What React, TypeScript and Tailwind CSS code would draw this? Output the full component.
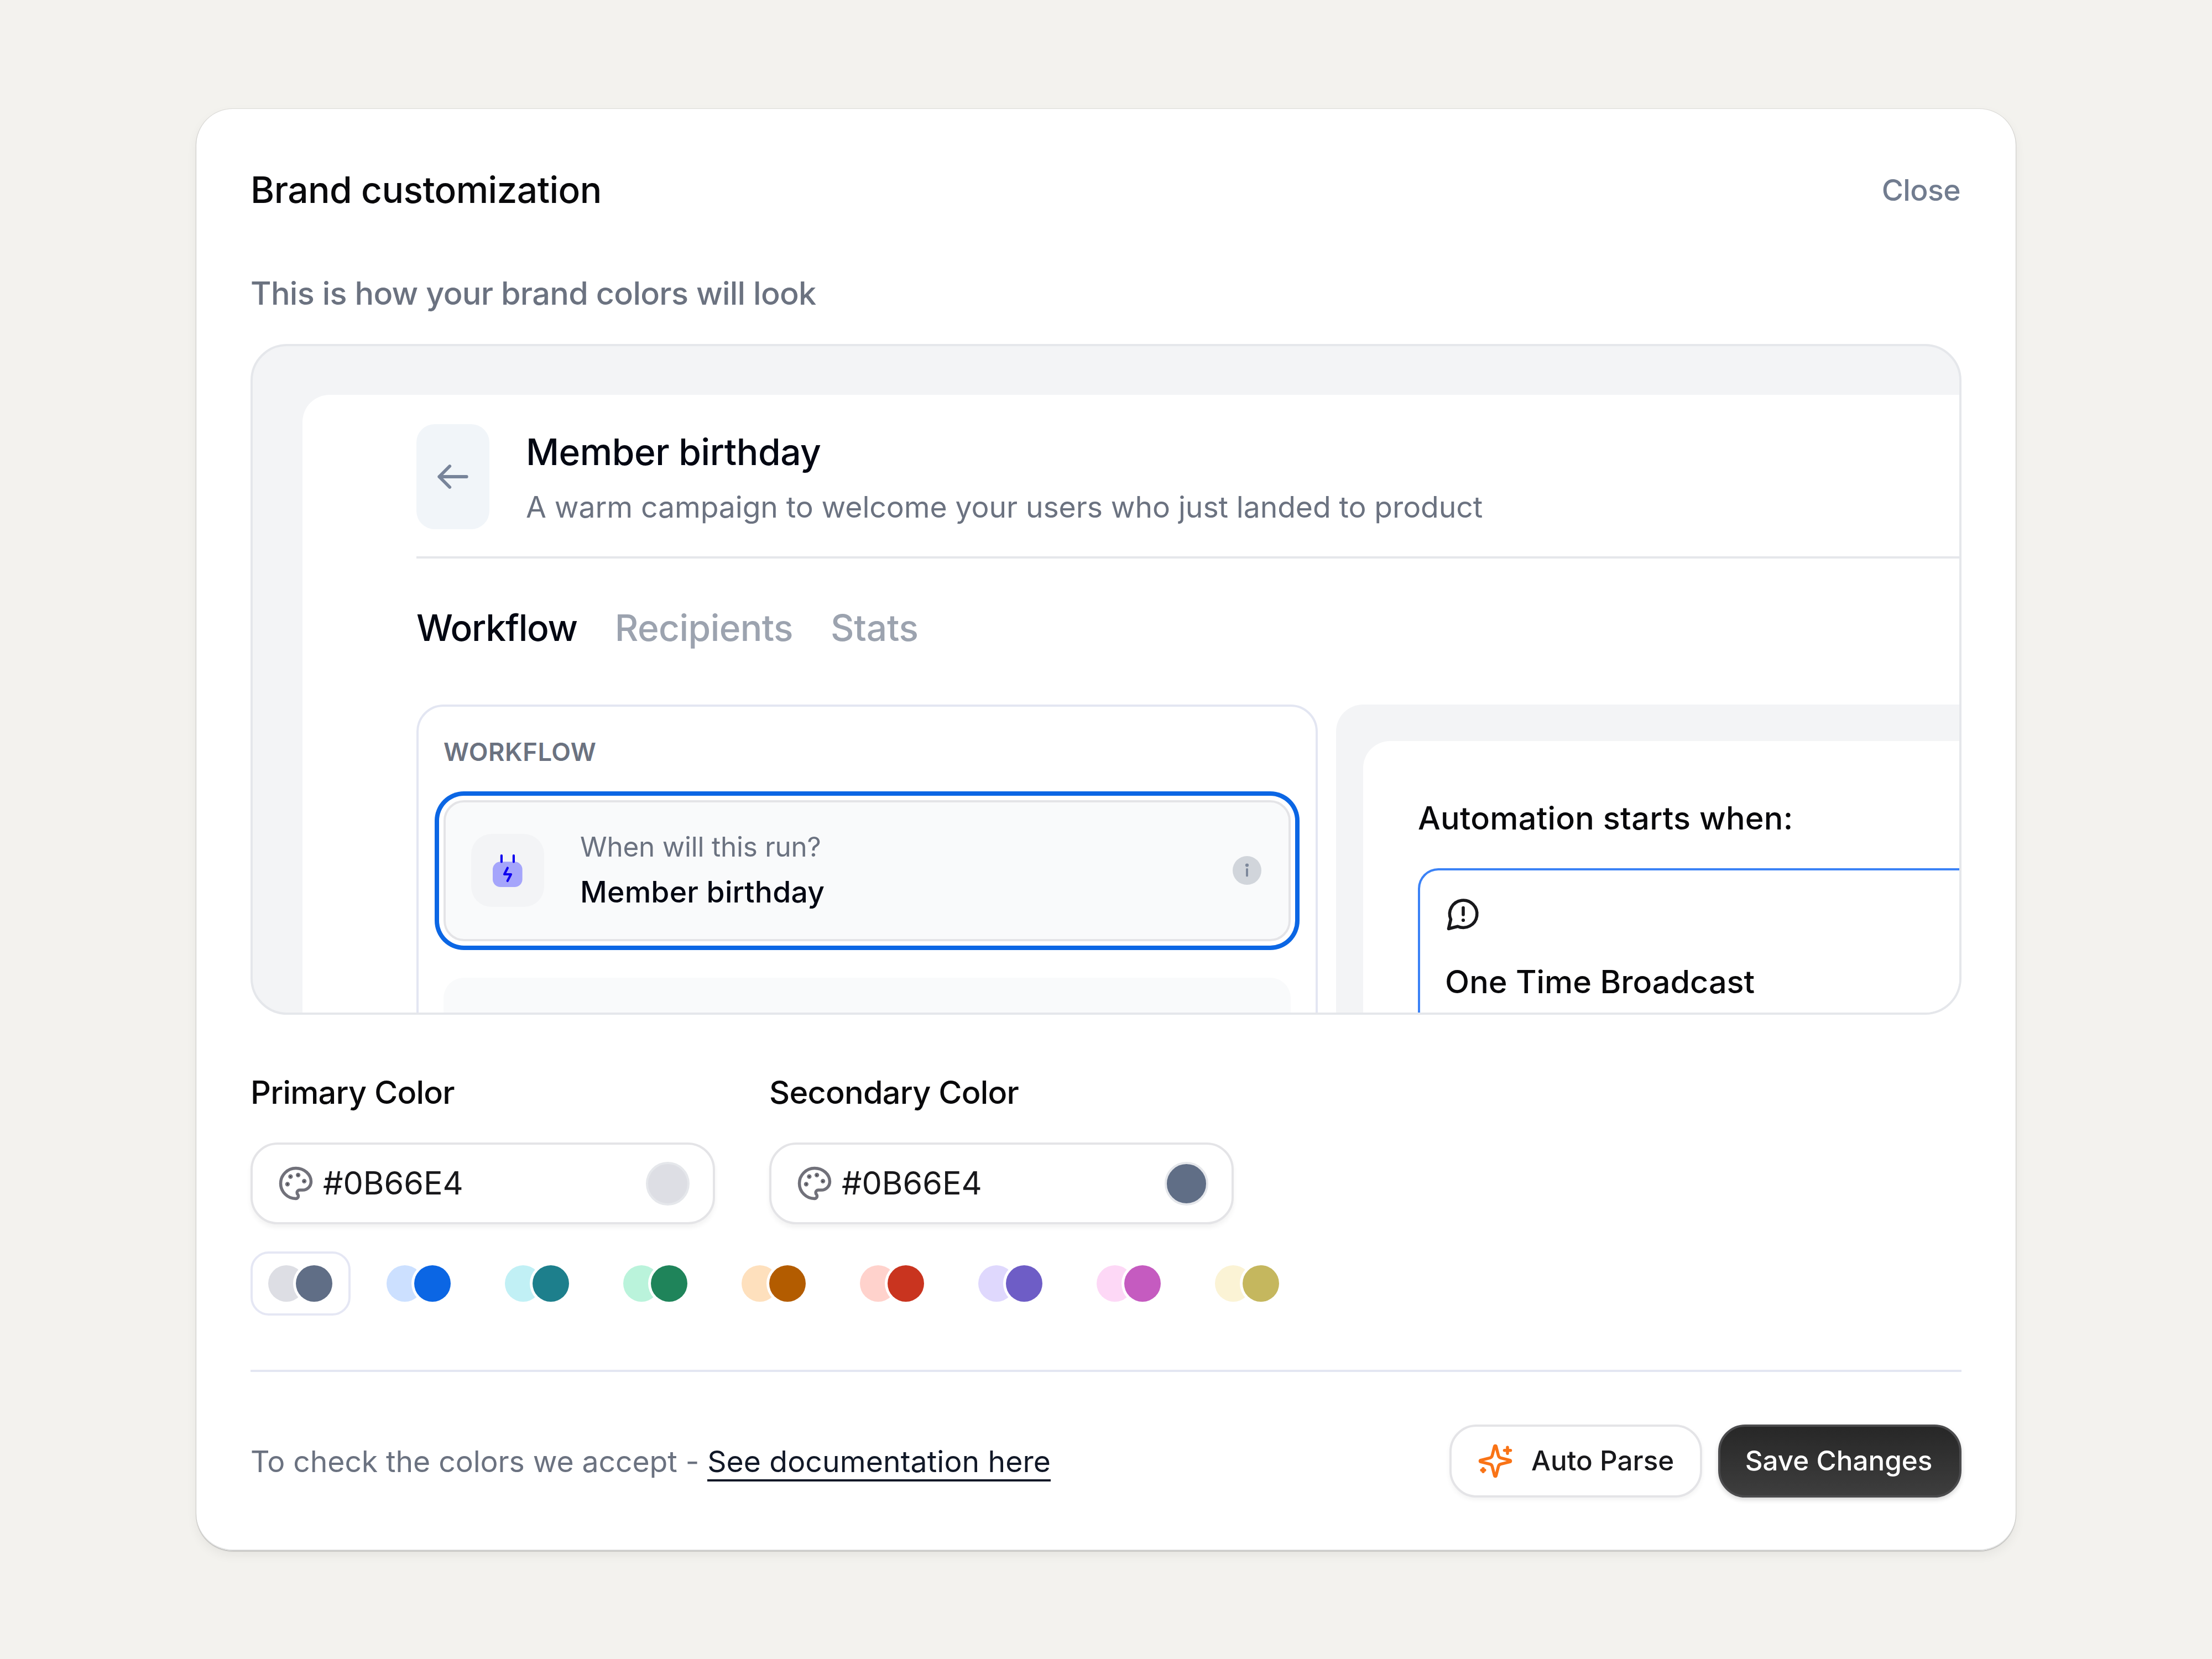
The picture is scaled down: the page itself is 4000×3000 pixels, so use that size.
import type { ReactNode } from "react";

const swatches = [
  { light: "bg-[#dddee4]", dark: "bg-[#606e86]" },
  { light: "bg-[#cce0ff]", dark: "bg-[#0b66e4]" },
  { light: "bg-[#c1f0f5]", dark: "bg-[#1d7f8c]" },
  { light: "bg-[#baf3db]", dark: "bg-[#1f845a]" },
  { light: "bg-[#fee0bd]", dark: "bg-[#b35c00]" },
  { light: "bg-[#ffd2cc]", dark: "bg-[#c9341f]" },
  { light: "bg-[#dfd8fd]", dark: "bg-[#6e5dc6]" },
  { light: "bg-[#fdd8f6]", dark: "bg-[#c55bc0]" },
  { light: "bg-[#fbf3d5]", dark: "bg-[#c5b75e]" },
];

function ArrowLeftIcon() {
  return (
    <svg className="h-[66px] w-[66px]" viewBox="0 0 16 16" fill="none" stroke="#78849a" strokeWidth="1.4" strokeLinecap="round" strokeLinejoin="round">
      <path d="M14 8H2M6.600 3.400 2 8l4.600 4.600" />
    </svg>
  );
}

function PlugIcon() {
  return (
    <svg className="h-[66px] w-[66px]" viewBox="0 0 66 66" fill="none">
      <rect x="6" y="17.3" width="53.6" height="45.7" rx="14" fill="#a5a5fb" />
      <path d="M21.900 6V17.500M43.900 6V17.500" stroke="#0f00ef" strokeWidth="4.2" strokeLinecap="round" />
      <path d="M32.900 28.500 27 40H39L32.700 52" stroke="#0f00ef" strokeWidth="4.2" strokeLinecap="round" strokeLinejoin="round" />
    </svg>
  );
}

function InfoIcon() {
  return (
    <svg className="h-[52px] w-[52px]" viewBox="0 0 52 52">
      <circle cx="26" cy="26" r="26" fill="#d1d5db" />
      <circle cx="26" cy="16.5" r="3.1" fill="#7d889b" />
      <path d="M26 24v11.500" stroke="#7d889b" strokeWidth="4" strokeLinecap="round" />
    </svg>
  );
}

function MessageIcon() {
  return (
    <svg className="h-[66px] w-[66px]" viewBox="0 0 66 66" fill="none" stroke="#18181b" strokeWidth="5.6" strokeLinecap="round" strokeLinejoin="round">
      <path d="M6.500 59.500 10.500 42.500A24.700 24.700 0 1 1 23 55.200Z" />
      <path d="M33 21.500V34" />
      <circle cx="33" cy="44" r="3.1" fill="#18181b" stroke="none" />
    </svg>
  );
}

function PaletteIcon() {
  return (
    <svg className="h-[66px] w-[66px]" viewBox="0 0 24 24" fill="none" stroke="#71717a" strokeWidth="2" strokeLinecap="round" strokeLinejoin="round">
      <circle cx="13.5" cy="6.5" r=".5" fill="#18181b" />
      <circle cx="17.5" cy="10.5" r=".5" fill="#18181b" />
      <circle cx="8.5" cy="7.5" r=".5" fill="#18181b" />
      <circle cx="6.5" cy="12.5" r=".5" fill="#18181b" />
      <path d="M12 2C6.500 2 2 6.500 2 12s4.500 10 10 10c.926 0 1.648-.746 1.648-1.688 0-.437-.18-.835-.437-1.125-.29-.289-.438-.652-.438-1.125a1.640 1.640 0 0 1 1.668-1.668h1.996c3.051 0 5.555-2.503 5.555-5.554C21.965 6.012 17.461 2 12 2z" />
    </svg>
  );
}

function SparklesIcon() {
  return (
    <svg className="h-[66px] w-[66px]" viewBox="0 0 24 24" fill="none" stroke="#f97316" strokeWidth="2" strokeLinecap="round" strokeLinejoin="round">
      <path d="M9.937 15.500A2 2 0 0 0 8.500 14.063l-6.135-1.582a.5.5 0 0 1 0-.962L8.500 9.936A2 2 0 0 0 9.937 8.500l1.582-6.135a.5.5 0 0 1 .963 0L14.063 8.500A2 2 0 0 0 15.500 9.937l6.135 1.581a.5.5 0 0 1 0 .964L15.500 14.063a2 2 0 0 0-1.437 1.437l-1.582 6.135a.5.5 0 0 1-.963 0z" />
      <path d="M20 3v4M22 5h-4M4 17v2M5 18H3" />
    </svg>
  );
}

type ColorFieldProps = {
  label: string;
  value: string;
  swatch: string;
};

function ColorField({ label, value, swatch }: ColorFieldProps) {
  return (
    <div className="w-[840px]">
      <div className="h-[70px] text-[57.6px] leading-[70px] font-medium tracking-[-0.75px] text-[#09090b]">{label}</div>
      <div className="mt-[56px] flex h-[148px] items-center rounded-[49px] border-4 border-[#e4e4e7] bg-white pr-[42px] pl-[45px] shadow-[0_6px_8px_rgba(0,0,0,0.05)]">
        <PaletteIcon />
        <span className="ml-[16px] flex-1 text-[57.6px] leading-none text-[#18181b]">{value}</span>
        <span className={`h-[79px] w-[79px] rounded-full border-4 border-[#e5e7eb] ${swatch}`} />
      </div>
    </div>
  );
}

function Button({ dark, children }: { dark?: boolean; children: ReactNode }) {
  const base = "flex h-[132px] items-center rounded-[49px] border-4 text-[49.4px] leading-none font-medium";
  return (
    <button
      className={
        dark
          ? `${base} w-[440px] justify-center border-[#4b4b4d] bg-linear-to-b from-[#272727] to-[#3e3e3e] pr-[4px] text-white shadow-[0_4px_8px_rgba(0,0,0,0.16)]`
          : `${base} w-[457px] border-[#e4e4e7] bg-white pl-[46px] text-[#18181b] shadow-[0_4px_8px_rgba(0,0,0,0.05)]`
      }
    >
      {children}
    </button>
  );
}

function WorkflowCard() {
  return (
    <div className="h-[700px] w-[1630px] shrink-0 rounded-[49px] border-4 border-[#e3e6f2] px-[45px] pt-[52px]">
      <div className="h-[60px] text-[45.2px] leading-[60px] font-semibold tracking-[0.5px] text-[#6b7280]">WORKFLOW</div>
      <div className="mt-[57px] flex h-[255px] items-center rounded-[37px] border-4 border-[#e4e4e7] bg-[#f9fafb] pr-[49px] pb-[1px] pl-[46px] ring-8 ring-[#0b66e4] ring-offset-8">
        <div className="flex h-[132px] w-[132px] items-center justify-center rounded-[37px] bg-[#f3f4f6]">
          <PlugIcon />
        </div>
        <div className="ml-[65px] flex-1 pb-[4px]">
          <div className="text-[49.4px] leading-[82px] tracking-[-0.2px] text-[#6b7280]">When will this run?</div>
          <div className="text-[53.5px] leading-[82px] font-medium tracking-[0.2px] text-[#030712]">Member birthday</div>
        </div>
        <InfoIcon />
      </div>
      <div className="mt-[66px] h-[255px] rounded-[37px] bg-[#f9fafb]" />
    </div>
  );
}

function AutomationPanel() {
  return (
    <div className="h-[700px] flex-1 rounded-tl-[49px] bg-[#f3f4f6] pt-[66px] pl-[49px]">
      <div className="h-full rounded-tl-[49px] bg-white pt-[104px] pl-[99px]">
        <div className="text-[57.6px] leading-[70px] font-medium tracking-[0.25px] text-[#09090b]">Automation starts when:</div>
        <div className="mt-[56px] h-[400px] rounded-tl-[37px] border-t-4 border-l-4 border-[#3b82f6] pt-[46px] pl-[45px]">
          <MessageIcon />
          <div className="mt-[54px] text-[57.6px] leading-[70px] font-medium whitespace-nowrap text-[#09090b]">One Time Broadcast</div>
        </div>
      </div>
    </div>
  );
}

function Preview() {
  return (
    <div className="h-[1213px] overflow-hidden rounded-[66px] border-4 border-[#e5e7eb] bg-[#f3f4f6] pt-[88px] pl-[90px]">
      <div className="h-full rounded-tl-[49px] bg-white pt-[53px] pl-[206px]">
        <div className="flex h-[243px] items-start border-b-4 border-[#e5e7eb]">
          <div className="flex h-[190px] w-[132px] items-center justify-center rounded-[33px] bg-[#f1f5f9]">
            <ArrowLeftIcon />
          </div>
          <div className="ml-[66px] pt-[1px]">
            <div className="text-[65.8px] leading-[99px] font-medium tracking-[-0.45px] text-[#030712]">Member birthday</div>
            <div className="text-[53.5px] leading-[99px] tracking-[-0.1px] text-[#6b7280]">A warm campaign to welcome your users who just landed to product</div>
          </div>
        </div>
        <div className="flex h-[264px] items-center gap-[68px] pb-[13px] text-[65.8px] leading-none font-medium tracking-[-0.55px] text-[#9ca3af]">
          <span className="tracking-[-1.2px] text-[#030712]">Workflow</span>
          <span>Recipients</span>
          <span className="tracking-[-0.2px]">Stats</span>
        </div>
        <div className="flex gap-[33px]">
          <WorkflowCard />
          <AutomationPanel />
        </div>
      </div>
    </div>
  );
}

export default function App() {
  return (
    <div className="flex h-[3000px] w-[4000px] items-start justify-center bg-[#f3f2ee] pt-[197px] font-['Inter',sans-serif]">
      <div className="flex h-[2607px] w-[3290px] flex-col rounded-[66px] bg-white px-[98px] pt-[97px] shadow-[inset_0_-2px_0_#e2e3e3,0_0_0_1px_rgba(9,9,11,0.08),0_1px_2px_rgba(9,9,11,0.25),0_8px_20px_rgba(9,9,11,0.06)]">
        <div className="flex h-[99px] items-center justify-between">
          <h1 className="text-[65.8px] leading-none font-medium tracking-[-0.57px] text-[#09090b]">Brand customization</h1>
          <button className="pr-[2px] text-[53.5px] leading-none font-medium tracking-[-0.6px] text-[#717c8f]">Close</button>
        </div>
        <div className="mt-[97px] mb-[52px] h-[80px] text-[57.6px] leading-[80px] font-medium tracking-[-0.69px] text-[#6b7280]">This is how your brand colors will look</div>
        <Preview />
        <div className="mt-[105px] flex gap-[98px]">
          <ColorField label="Primary Color" value="#0B66E4" swatch="bg-[#dddee4]" />
          <ColorField label="Secondary Color" value="#0B66E4" swatch="bg-[#606e86]" />
        </div>
        <div className="mt-[49px] flex gap-[33px]">
          {swatches.map((s, i) => (
            <div key={s.dark} className={`flex h-[116px] w-[181px] items-center rounded-[33px] border-4 pl-[28px] ${i === 0 ? "border-[#e5e7f4]" : "border-transparent"}`}>
              <span className={`h-[66px] w-[66px] rounded-full ${s.light}`} />
              <span className={`-ml-[16px] h-[66px] w-[66px] rounded-full ring-[5px] ring-white ${s.dark}`} />
            </div>
          ))}
        </div>
        <div className="mt-[98px] h-1 bg-[#e3e6f2]" />
        <div className="mt-[95px] flex h-[132px] items-center">
          <p className="flex-1 pt-[1px] text-[53.5px] leading-[64px] tracking-[-0.08px] text-[#6b7280]">
            To check the colors we accept - <a className="border-b-4 border-[#111827] tracking-[0.1px] text-[#111827]">See documentation here</a>
          </p>
          <div className="flex gap-[29px]">
            <Button>
              <SparklesIcon />
              <span className="ml-[32px]">Auto Parse</span>
            </Button>
            <Button dark>Save Changes</Button>
          </div>
        </div>
      </div>
    </div>
  );
}
